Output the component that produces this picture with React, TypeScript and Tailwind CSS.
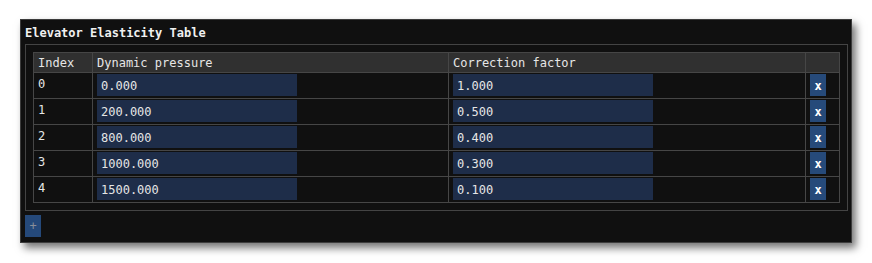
import React from 'react';

const rows = [
  { idx: 0, pressure: '0.000', factor: '1.000' },
  { idx: 1, pressure: '200.000', factor: '0.500' },
  { idx: 2, pressure: '800.000', factor: '0.400' },
  { idx: 3, pressure: '1000.000', factor: '0.300' },
  { idx: 4, pressure: '1500.000', factor: '0.100' },
];

const mono = { fontFamily: '"DejaVu Sans Mono", "Liberation Mono", monospace' };

export default function App() {
  return (
    <div className="w-[872px] h-[263px] bg-white pt-[19px] pl-[20px]" style={mono}>
      {/* Window */}
      <div className="w-[832px] h-[224px] bg-[#101010] border border-[#3c3c3c] shadow-[4px_5px_8px_rgba(0,0,0,0.55)] flex flex-col">
        <div className="h-[24px] pl-[4px] pt-[6px] text-[12px] leading-[15px] font-bold text-[#f0f0f0]">
          Elevator Elasticity Table
        </div>
        {/* Child frame */}
        <div className="ml-[4px] w-[823px] h-[167px] border border-[#444] p-[7px]">
          <table className="w-[806px] border-collapse text-[12px] leading-[15px] text-[#e6e6e6] table-fixed">
            <colgroup>
              <col className="w-[59px]" />
              <col className="w-[356px]" />
              <col className="w-[357px]" />
              <col className="w-[34px]" />
            </colgroup>
            <thead>
              <tr className="h-[20px] bg-[#303030]">
                <th className="border border-[#464646] text-left font-normal px-[4px] pt-[2px]">Index</th>
                <th className="border border-[#464646] text-left font-normal px-[4px] pt-[2px]">Dynamic pressure</th>
                <th className="border border-[#464646] text-left font-normal px-[4px] pt-[2px]">Correction factor</th>
                <th className="border border-[#464646]"></th>
              </tr>
            </thead>
            <tbody>
              {rows.map((r) => (
                <tr key={r.idx} className="h-[26px]">
                  <td className="border border-[#464646] align-top px-[4px] pt-[4px]">{r.idx}</td>
                  <td className="border border-[#464646] align-top pl-[4px] pt-[1px]">
                    <div className="w-[200px] h-[22px] bg-[#1e2d49] pl-[4px] pt-[2px] flex items-center">{r.pressure}</div>
                  </td>
                  <td className="border border-[#464646] align-top pl-[4px] pt-[1px]">
                    <div className="w-[200px] h-[22px] bg-[#1e2d49] pl-[4px] pt-[2px] flex items-center">{r.factor}</div>
                  </td>
                  <td className="border border-[#464646] align-top pl-[4px] pt-[1px]">
                    <div className="w-[16px] h-[22px] bg-[#264a7a] pt-[2px] flex items-center justify-center font-bold text-white">x</div>
                  </td>
                </tr>
              ))}
            </tbody>
          </table>
        </div>
        <div className="ml-[4px] mt-[4px] w-[16px] h-[22px] bg-[#25497a] flex items-center justify-center text-[#8a8f99] text-[12px]">
          +
        </div>
      </div>
    </div>
  );
}
